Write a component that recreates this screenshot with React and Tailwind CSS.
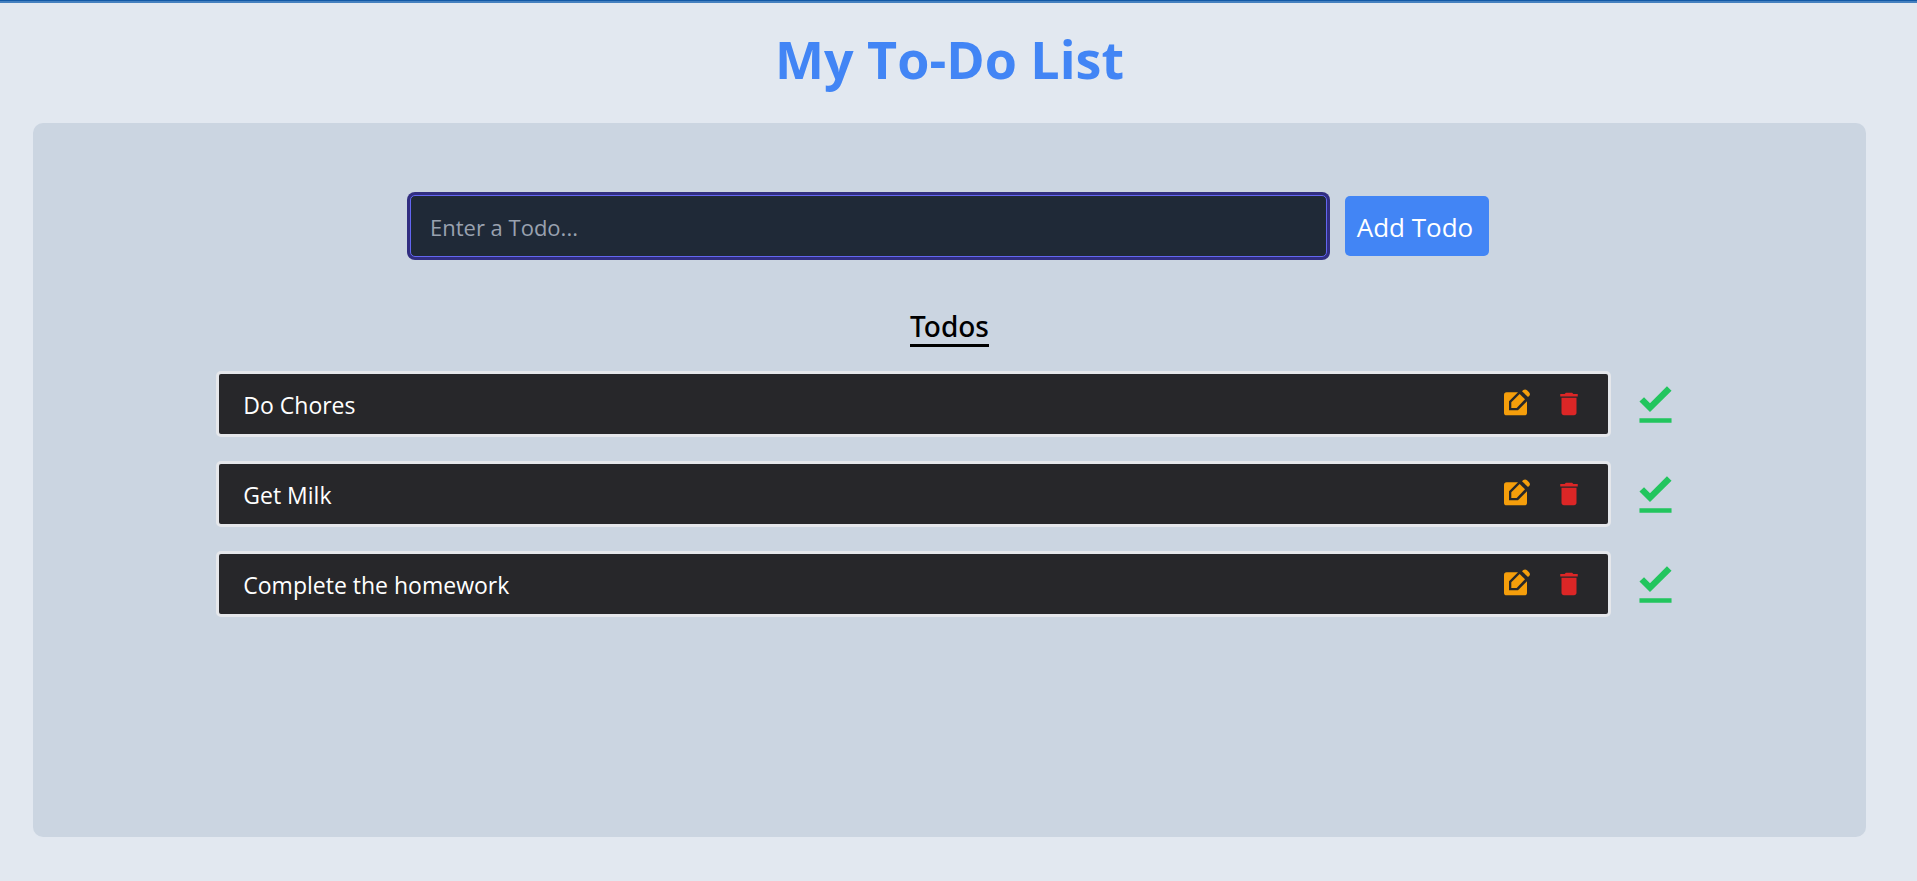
import { useState } from 'react';
import { MdDelete, MdFileDownloadDone } from 'react-icons/md';

function EditIcon() {
  return (
    <svg viewBox="0 5 90 90" fill="currentColor" aria-hidden="true" className="size-[30px]">
      <path d="M14 15H48L21 42V69H48L75 42V76a8 8 0 0 1-8 8H14a8 8 0 0 1-8-8V23a8 8 0 0 1 8-8z" />
      <path d="M28 45L53 20L69 36L44 62H28z" />
      <path d="M60 12L64 8Q70 4 75 9L81 15Q86 20 82 25L78 29z" />
    </svg>
  );
}

function TodoItem({ text }) {
  return (
    <li className="flex items-center gap-[17px]">
      <div className="flex h-[66px] min-w-0 flex-1 items-center justify-between rounded-[5px] border-[3px] border-gray-200 bg-zinc-800 px-6">
        <span className="pt-0.5 text-[23px] leading-8 text-white">{text}</span>
        <span className="flex items-center gap-[22px]">
          <button type="button" aria-label={`Edit ${text}`} className="text-[#f59e0b]">
            <EditIcon />
          </button>
          <button type="button" aria-label={`Delete ${text}`} className="text-[#dc2626]">
            <MdDelete className="size-[30px]" />
          </button>
        </span>
      </div>
      <button type="button" aria-label={`Complete ${text}`} className="text-[#22c55e]">
        <MdFileDownloadDone className="size-[55px]" />
      </button>
    </li>
  );
}

export default function App() {
  const [todos, setTodos] = useState(['Do Chores', 'Get Milk', 'Complete the homework']);
  const [draft, setDraft] = useState('');

  const addTodo = (event) => {
    event.preventDefault();
    if (!draft.trim()) return;
    setTodos([...todos, draft.trim()]);
    setDraft('');
  };

  return (
    <div className="flex min-h-screen flex-col border-t border-[#1259a6] bg-[#e2e8f0] font-['Open_Sans','Noto_Sans',sans-serif]">
      <div className="h-0.5 bg-[#4580bf]" />
      <div className="flex flex-1 flex-col pb-11 pl-[33px] pr-[51px]">
        <h1 className="pb-[34px] pt-[26px] text-center text-[52px] font-bold leading-[60px] text-[#4285f5]">My To-Do List</h1>
        <main className="flex flex-1 flex-col rounded-[10px] bg-[#cbd5e1] pt-[72px]">
          <form onSubmit={addTodo} className="mx-auto flex w-full max-w-[1079px] items-center gap-[18px]">
            <input
              type="text"
              aria-label="Todo"
              placeholder="Enter a Todo..."
              value={draft}
              onChange={(event) => setDraft(event.target.value)}
              className="h-[62px] min-w-0 flex-1 rounded-[5px] border border-[#6366f1] bg-[#1f2937] px-[19px] pt-0.5 text-[22px] text-gray-100 outline-none ring-3 ring-[#312e81] placeholder:text-gray-400"
            />
            <button type="submit" className="h-[60px] w-36 rounded-[5px] bg-[#4285f5] pr-1 pt-0.5 text-[26px] text-white">
              Add Todo
            </button>
          </form>
          <h2 className="mx-auto mt-12 border-b-[3px] border-black pt-1 font-['Noto_Sans',sans-serif] text-[28px] font-medium leading-[35px]">Todos</h2>
          <ul className="mx-auto mt-6 flex w-[80%] flex-col gap-6">
            {todos.map((todo) => (
              <TodoItem key={todo} text={todo} />
            ))}
          </ul>
        </main>
      </div>
    </div>
  );
}
